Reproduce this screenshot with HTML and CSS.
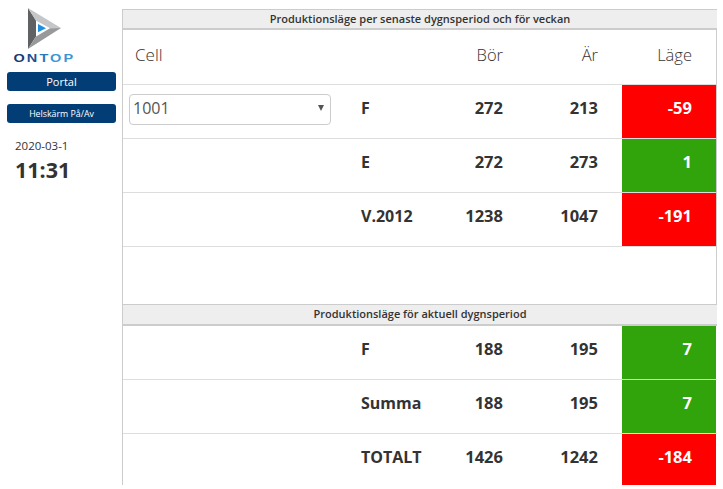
FILE: index.html
```html
<!DOCTYPE html>
<html lang="sv">
<head>
<meta charset="utf-8">
<title>Produktionsläge</title>
<link rel="stylesheet" href="styles.css">
</head>
<body>
<div class="page">
  <aside class="side">
    <div class="logo">
      <svg class="mark" width="33" height="41" viewBox="0 0 33 41" aria-hidden="true">
        <polygon points="0,0 0,41 8,28.500 8,12.500" fill="#5f6163"/>
        <polygon points="0,0 33,20 22,20.300 8,12.500" fill="#c4c6c8"/>
        <polygon points="0,41 33,20 22,20.300 8,28.500" fill="#97999b"/>
        <polygon points="10,16 18,20.300 10,24.300" fill="#1e8fe0"/>
      </svg>
      <div class="brand"><span class="b-o">O</span><span class="b-n">N</span><span class="b-t">T</span><span class="b-p">OP</span></div>
    </div>
    <button class="btn btn-portal">Portal</button>
    <button class="btn btn-full">Helskärm På/Av</button>
    <div class="date">2020-03-1</div>
    <div class="time">11:31</div>
  </aside>
  <main class="main">
    <h2 class="bar">Produktionsläge per senaste dygnsperiod och för veckan</h2>
    <div class="row head">
      <div class="c-cell">Cell</div><div></div><div class="num">Bör</div><div class="num">Är</div><div class="num">Läge</div>
    </div>
    <div class="row">
      <div class="c-cell"><div class="select"><span>1001</span><span class="caret"></span></div></div>
      <div class="lbl">F</div><div class="num">272</div><div class="num">213</div><div class="num st red">-59</div>
    </div>
    <div class="row">
      <div class="c-cell"></div><div class="lbl">E</div><div class="num">272</div><div class="num">273</div><div class="num st green">1</div>
    </div>
    <div class="row">
      <div class="c-cell"></div><div class="lbl">V.2012</div><div class="num">1238</div><div class="num">1047</div><div class="num st red">-191</div>
    </div>
    <div class="spacer"></div>
    <h2 class="bar bar-second">Produktionsläge för aktuell dygnsperiod</h2>
    <div class="row open">
      <div class="c-cell"></div><div class="lbl">F</div><div class="num">188</div><div class="num">195</div><div class="num st green">7</div>
    </div>
    <div class="row open">
      <div class="c-cell"></div><div class="lbl">Summa</div><div class="num">188</div><div class="num">195</div><div class="num st green">7</div>
    </div>
    <div class="row open last">
      <div class="c-cell"></div><div class="lbl">TOTALT</div><div class="num">1426</div><div class="num">1242</div><div class="num st red">-184</div>
    </div>
  </main>
</div>
</body>
</html>
```
FILE: styles.css
```css
* { box-sizing: border-box; }
html, body { margin: 0; padding: 0; background: #fff; }
body { font-family: "Open Sans", "Liberation Sans", sans-serif; color: #333; overflow: hidden; }
.page { display: flex; width: 723px; height: 489px; align-items: flex-start; }
.side { width: 122px; flex: none; padding: 8px 0 0 7px; }
.logo { width: 74px; display: flex; flex-direction: column; align-items: center; }
.mark { display: block; }
.brand { margin-top: 3px; line-height: 12px; height: 12px; font-family: "Liberation Sans", sans-serif; font-weight: 700; font-size: 10.500px; letter-spacing: 1.500px; white-space: nowrap; transform: scaleX(1.38); }
.b-o { color: #17396f; }
.b-n { color: #1f4f8f; }
.b-t { color: #2a78bd; }
.b-p { color: #3a97d6; }
.btn { display: block; width: 109px; border: 0; border-radius: 3px; background: #033d75; color: #fff; font-family: "Open Sans", sans-serif; padding: 0; text-align: center; }
.btn-portal { margin-top: 8px; height: 19px; font-size: 11px; }
.btn-full { margin-top: 13px; height: 19px; font-size: 8.800px; }
.date { margin: 16px 0 0 8px; font-size: 11.500px; line-height: 14px; color: #333; }
.time { margin: 5px 0 0 8px; font-size: 21.500px; line-height: 24px; font-weight: 700; color: #333; }
.main { width: 595px; margin-top: 9px; height: 476px; border-left: 1px solid #ccc; display: flex; flex-direction: column; }
.bar { margin: 0; height: 21px; flex: none; background: #eee; border-top: 1px solid #ccc; border-bottom: 2px solid #ccc; font-size: 11px; font-weight: 600; line-height: 18px; text-align: center; color: #333; }
.bar-second { height: 22px; line-height: 18px; }
.row { display: grid; grid-template-columns: 238px 80px 86px 95px 94px; height: 54px; flex: none; border-bottom: 1px solid #ddd; border-right: 1px solid #ccc; align-items: stretch; font-size: 16px; font-weight: 700; }
.row > div { display: flex; align-items: center; min-width: 0; padding-bottom: 7px; }
.row > .num { justify-content: flex-end; padding-right: 24px; padding-bottom: 9px; font-size: 16.500px; }
.head { height: 55px; }
.head > div { font-weight: 300; }
.row.head > div { padding-bottom: 6px; }
.row.head .c-cell { padding-left: 12px; font-size: 17px; }
.lbl { white-space: nowrap; }
.row .c-cell { padding-left: 6px; }
.select { width: 202px; height: 31px; margin-top: 3px; display: flex; align-items: center; justify-content: space-between; border: 1px solid #ccc; border-radius: 4px; padding: 0 6px 4px 3px; font-size: 16px; font-weight: 400; color: #555; }
.caret { width: 0; height: 0; border-left: 3px solid transparent; border-right: 3px solid transparent; border-top: 6px solid #555; }
.st { color: #fff; }
.red { background: #f00; }
.green { background: #32a40b; }
.spacer { height: 57px; flex: none; border-right: 1px solid #ccc; }
.open { border-right: 0; }
.row.last { border-bottom: 0; height: auto; flex: 1 1 0; min-height: 0; }
.row.last > div { padding-bottom: 5px; }
.row.last > .num { padding-bottom: 7px; }
```
